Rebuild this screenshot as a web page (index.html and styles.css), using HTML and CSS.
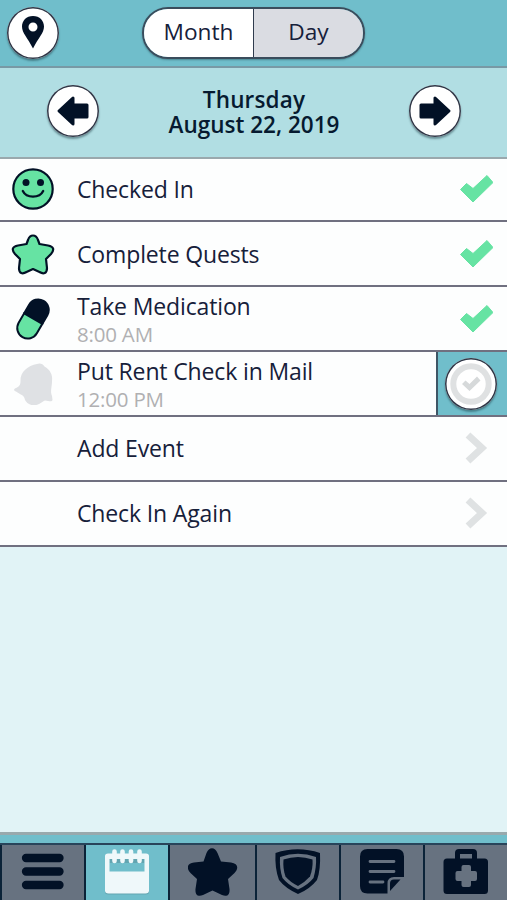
FILE: index.html
```html
<!DOCTYPE html>
<html lang="en">

<head>
    <meta charset="UTF-8">
    <meta name="viewport" content="width=device-width, initial-scale=1.0">
    <title>Calendar</title>
    <link rel="stylesheet" href="styles.css">
</head>

<body>
    <div class="app">
        <div class="top">
            <div class="round">
                <svg width="52" height="52" viewBox="0 0 52 52">
                    <path fill="#021126" fill-rule="evenodd" d="M26 9C19.300 9 15 13.800 15 19.500C15 26 20.500 30.500 26 41.500C31.500 30.500 37 26 37 19.500C37 13.800 32.700 9 26 9ZM26 15.500A4.500 4.500 0 1 1 26 24.500A4.500 4.500 0 1 1 26 15.500Z"/>
                </svg>
            </div>
            <div class="tabs">
                <div class="tab">Month</div>
                <div class="tab active">Day</div>
            </div>
        </div>

        <div class="date-bar">
            <div class="round">
                <svg width="52" height="52" viewBox="0 0 52 52">
                    <path class="arrow" d="M12 26L26 13V20H40V32H26V39Z"/>
                </svg>
            </div>
            <div class="date">
                <div class="weekday">Thursday</div>
                <div class="day">August 22, 2019</div>
            </div>
            <div class="round">
                <svg width="52" height="52" viewBox="0 0 52 52">
                    <path class="arrow" d="M40 26L26 13V20H12V32H26V39Z"/>
                </svg>
            </div>
        </div>

        <div class="list">
            <div class="row first">
                <div class="icon">
                    <svg width="44" height="44" viewBox="0 0 44 44">
                        <circle cx="22" cy="22" r="19.700" fill="#66e3a3" stroke="#021126" stroke-width="2.200"/>
                        <circle cx="15" cy="15.500" r="3.500" fill="#021126"/>
                        <circle cx="29.500" cy="15.500" r="3.500" fill="#021126"/>
                        <path d="M11.800 24C15.500 31.500 28.500 31.500 32.200 24" fill="none" stroke="#021126" stroke-width="2.300" stroke-linecap="round"/>
                    </svg>
                </div>
                <div class="text"><p class="title">Checked In</p></div>
                <div class="mark"><svg width="36" height="30" viewBox="0 0 36 30"><path class="check" d="M3.500 15.500L9.500 9.500L16 14.500L30 1.500L36 8.500L16 28Z"/></svg></div>
            </div>
            <div class="row">
                <div class="icon">
                    <svg width="44" height="44" viewBox="0 0 44 44">
                        <path d="M17 8C19 2 25 2 27 8L28.500 12L37 13.500C43 14.500 43.500 18 40 22L35 27L36 36C36 41.500 32.500 42.500 28.500 40L22 37L15.500 40C11.500 42.500 8 41.500 8 36L9 27L4 22C.5 18 1 14.500 7 13.500L15.500 12Z" fill="#66e3a3" stroke="#021126" stroke-width="2.200" stroke-linejoin="round"/>
                    </svg>
                </div>
                <div class="text"><p class="title">Complete Quests</p></div>
                <div class="mark"><svg width="36" height="30" viewBox="0 0 36 30"><path class="check" d="M3.500 15.500L9.500 9.500L16 14.500L30 1.500L36 8.500L16 28Z"/></svg></div>
            </div>
            <div class="row">
                <div class="icon">
                    <svg width="44" height="44" viewBox="0 0 44 44">
                        <g transform="rotate(30 22 22)">
                            <path d="M10.500 22V11.500A11.500 11.500 0 0 1 33.500 11.500V22Z" fill="#021126"/>
                            <path d="M11.500 21.500H32.500V32.500A10.500 10.500 0 0 1 11.500 32.500Z" fill="#66e3a3" stroke="#021126" stroke-width="2"/>
                        </g>
                    </svg>
                </div>
                <div class="text">
                    <p class="title">Take Medication</p>
                    <p class="time">8:00 AM</p>
                </div>
                <div class="mark"><svg width="36" height="30" viewBox="0 0 36 30"><path class="check" d="M3.500 15.500L9.500 9.500L16 14.500L30 1.500L36 8.500L16 28Z"/></svg></div>
            </div>
            <div class="row">
                <div class="icon">
                    <svg width="44" height="44" viewBox="0 0 44 44">
                        <path fill="#dfe1e4" d="M9.500 19C9 10 17 3.500 26 2C29 .5 32 2 33.500 4.500C39 7.500 42 13 41 19C41 25 39 29 41 34L41.500 38C41 40 38 39 34 38.500C29 41 27 43.500 23 43C18.500 43.500 14 40 13.500 36C12 32.500 8 32 5 29.500C1.500 28 3.500 26.500 6 25.500C9 24 9.500 22 9.500 19Z"/>
                    </svg>
                </div>
                <div class="text">
                    <p class="title">Put Rent Check in Mail</p>
                    <p class="time">12:00 PM</p>
                </div>
                <div class="todo">
                    <div class="round">
                        <svg width="52" height="52" viewBox="0 0 52 52">
                            <circle cx="26" cy="26" r="17.700" fill="none" stroke="#dfe1e2" stroke-width="6"/>
                            <path fill="#d6d9da" d="M17 26L20.500 22.500L24.500 26L32 18.500L35.500 22.500L24.500 33Z"/>
                        </svg>
                    </div>
                </div>
            </div>
            <div class="row link">
                <div class="icon"></div>
                <div class="text"><p class="title">Add Event</p></div>
                <div class="mark"><svg width="36" height="34" viewBox="0 0 36 34"><path class="chevron" d="M11 4L25 17L11 30"/></svg></div>
            </div>
            <div class="row link">
                <div class="icon"></div>
                <div class="text"><p class="title">Check In Again</p></div>
                <div class="mark"><svg width="36" height="34" viewBox="0 0 36 34"><path class="chevron" d="M11 4L25 17L11 30"/></svg></div>
            </div>
        </div>

        <div class="strip"></div>
        <div class="nav">
            <div class="nav-item">
                <svg width="50" height="56" viewBox="0 0 50 56">
                    <path d="M8 13H41.500M8 26.500H41.500M8 40H41.500" stroke="#021126" stroke-width="8.300" stroke-linecap="round"/>
                </svg>
            </div>
            <div class="nav-item active">
                <svg width="50" height="56" viewBox="0 0 50 56">
                    <path class="pad-shadow" d="M3 44H47V47Q47 49.500 43.500 49.500H6.500Q3 49.500 3 47ZM7.500 14H42.500V18H7.500Z"/>
                    <path fill="#eff8fa" fill-rule="evenodd" d="M3 11Q3 8.500 6 8.500H44Q47 8.500 47 11V45.500Q47 48.500 43.500 48.500H6.500Q3 48.500 3 45.500ZM7.500 14V26.500H42.500V14Z"/>
                    <path d="M12.500 6.500V16M20.500 6.500V16M29 6.500V16M37.500 6.500V16" stroke="#eff8fa" stroke-width="4.600" stroke-linecap="round"/>
                </svg>
            </div>
            <div class="nav-item">
                <svg width="50" height="56" viewBox="0 0 50 56">
                    <path fill="#021126" d="M18.500 8C21 1.500 27 1.500 29.500 8L33 16.500L43 17.500C50 18.500 51 23 46.500 28L40 34L41.500 44C42 50.500 38.500 52 34 50L24.500 45.500L15 50C10.500 52 7 50.500 7.500 44L9 34L2.500 28C-2 23-1 18.500 6 17.500L15.500 16.500Z"/>
                </svg>
            </div>
            <div class="nav-item">
                <svg width="50" height="56" viewBox="0 0 50 56">
                    <path fill="#021126" fill-rule="evenodd" d="M2.500 8Q24.500 .5 47 8C47.500 19 46.500 28 44 35Q37 44 25 49Q12 43 6 35C3 27 2 18 2.500 8ZM7 12C6.500 20 7.500 27 9.500 33Q15 40 25 44.500Q35 40 40.500 33C42.500 26 43.500 19 43 12Q25 5.500 7 12Z"/>
                    <path fill="#021126" d="M10.500 14.500Q25 9.500 39.500 14.500C40 20 39 26 37 31.500Q32 37 25 41Q17 37 12.500 31.500C10.500 26 10 20 10.500 14.500Z"/>
                </svg>
            </div>
            <div class="nav-item">
                <svg width="50" height="56" viewBox="0 0 50 56">
                    <path fill="#021126" d="M10.500 4H39.500Q47 4 47 11.500V32H37Q30.500 32 30.500 38.500V48.500H10.500Q3 48.500 3 41V11.500Q3 4 10.500 4Z"/>
                    <path fill="#021126" d="M33 46V38.500Q33 34.500 37 34.500H43.500Z"/>
                    <path d="M13 16.500H37M13 26.500H37M13 37H26" stroke="#677280" stroke-width="2.800" stroke-linecap="round"/>
                </svg>
            </div>
            <div class="nav-item">
                <svg width="50" height="56" viewBox="0 0 50 56">
                    <path fill="#021126" fill-rule="evenodd" d="M6 13.500H14V8Q14 4 18 4H32Q36 4 36 8V13.500H43.500Q47 13.500 47 17V45.500Q47 49 43.500 49H6Q2.500 49 2.500 45.500V17Q2.500 13.500 6 13.500ZM19 9V13.500H31V9Z"/>
                    <path fill="#677280" d="M22.500 20H28Q30 20 30 22V26H34Q36 26 36 28V34Q36 36 34 36H30V40Q30 42 28 42H22.500Q20.500 42 20.500 40V36H16.500Q14.500 36 14.500 34V28Q14.500 26 16.500 26H20.500V22Q20.500 20 22.500 20Z"/>
                </svg>
            </div>
        </div>
    </div>
</body>

</html>
```
FILE: styles.css
```css
* {
    box-sizing: border-box;
}

body {
    margin: 0;
    font-family: "Open Sans", "Noto Sans", sans-serif;
    color: #16203a;
}

p {
    margin: 0;
}

svg {
    display: block;
    flex: none;
}

.app {
    width: 507px;
    height: 900px;
    display: flex;
    flex-direction: column;
    background-color: #e1f3f6;
    overflow: hidden;
}

.top {
    height: 68px;
    flex: none;
    display: flex;
    align-items: flex-start;
    padding: 7px;
    background-color: #70becb;
    border-bottom: 2px solid #7899a5;
}

.round {
    width: 52px;
    height: 52px;
    flex: none;
    border-radius: 50%;
    background-color: white;
    box-shadow: inset 0 0 0 1.5px #303848, 0 2px 2px rgba(20, 50, 60, 0.45);
}

.tabs {
    display: flex;
    width: 223px;
    height: 52px;
    margin-left: 83px;
    border: 2px solid #3a4c5c;
    border-radius: 26px;
    overflow: hidden;
    box-shadow: 0 1px 2px rgba(20, 50, 60, 0.4);
}

.tab {
    width: 109px;
    text-align: center;
    font-size: 22.7px;
    line-height: 46px;
    background-color: white;
}

.tab.active {
    flex: 1;
    background-color: #dadce2;
    border-left: 1.5px solid #303c4e;
}

.date-bar {
    height: 91px;
    flex: none;
    display: flex;
    justify-content: space-between;
    padding: 17px 46px 0 47px;
    background-color: #b1dee3;
    border-bottom: 2px solid #9aa8ad;
}

.arrow {
    fill: #021126;
    stroke: #021126;
    stroke-width: 3;
    stroke-linejoin: round;
}

.date {
    padding-top: 3px;
    text-align: center;
    font-size: 22.5px;
    line-height: 24.5px;
    font-weight: 600;
    color: #061a30;
}

.weekday {
    letter-spacing: 0.15px;
}

.row {
    height: 65px;
    display: flex;
    align-items: center;
    background-color: #fdfefe;
    border-bottom: 2px solid #707080;
}

.row.first {
    height: 63px;
    padding-bottom: 2px;
}

.row.link {
    padding-bottom: 2px;
}

.icon {
    width: 77px;
    padding-left: 11px;
    flex: none;
}

.text {
    flex: 1;
    white-space: nowrap;
}

.title {
    font-size: 23px;
    line-height: 30px;
    letter-spacing: -0.14px;
}

.time {
    font-size: 20.5px;
    line-height: 26px;
    letter-spacing: -0.2px;
    color: #b0b0b2;
}

.mark {
    width: 50px;
    flex: none;
}

.check {
    fill: #66e3a3;
    stroke: #66e3a3;
    stroke-width: 1;
    stroke-linejoin: round;
}

.chevron {
    fill: none;
    stroke: #dfe2e3;
    stroke-width: 7;
}

.todo {
    width: 71px;
    align-self: stretch;
    display: flex;
    align-items: center;
    padding-left: 7px;
    background-color: #70becb;
    border-left: 2px solid #3f5666;
}

.strip {
    height: 11px;
    flex: none;
    margin-top: auto;
    background-color: #70becb;
    border-top: 3px solid #98a9ad;
}

.nav {
    height: 57px;
    flex: none;
    display: grid;
    grid-template-columns: 84px 84px 87px 84px 84px 84px;
    border-top: 2px solid #28445a;
}

.nav-item {
    display: flex;
    justify-content: center;
    background-color: #677280;
    border-left: 2px solid #0b2338;
}

.nav-item.active {
    background-color: #70becb;
}

.pad-shadow {
    fill: #62a5b1;
}
```
